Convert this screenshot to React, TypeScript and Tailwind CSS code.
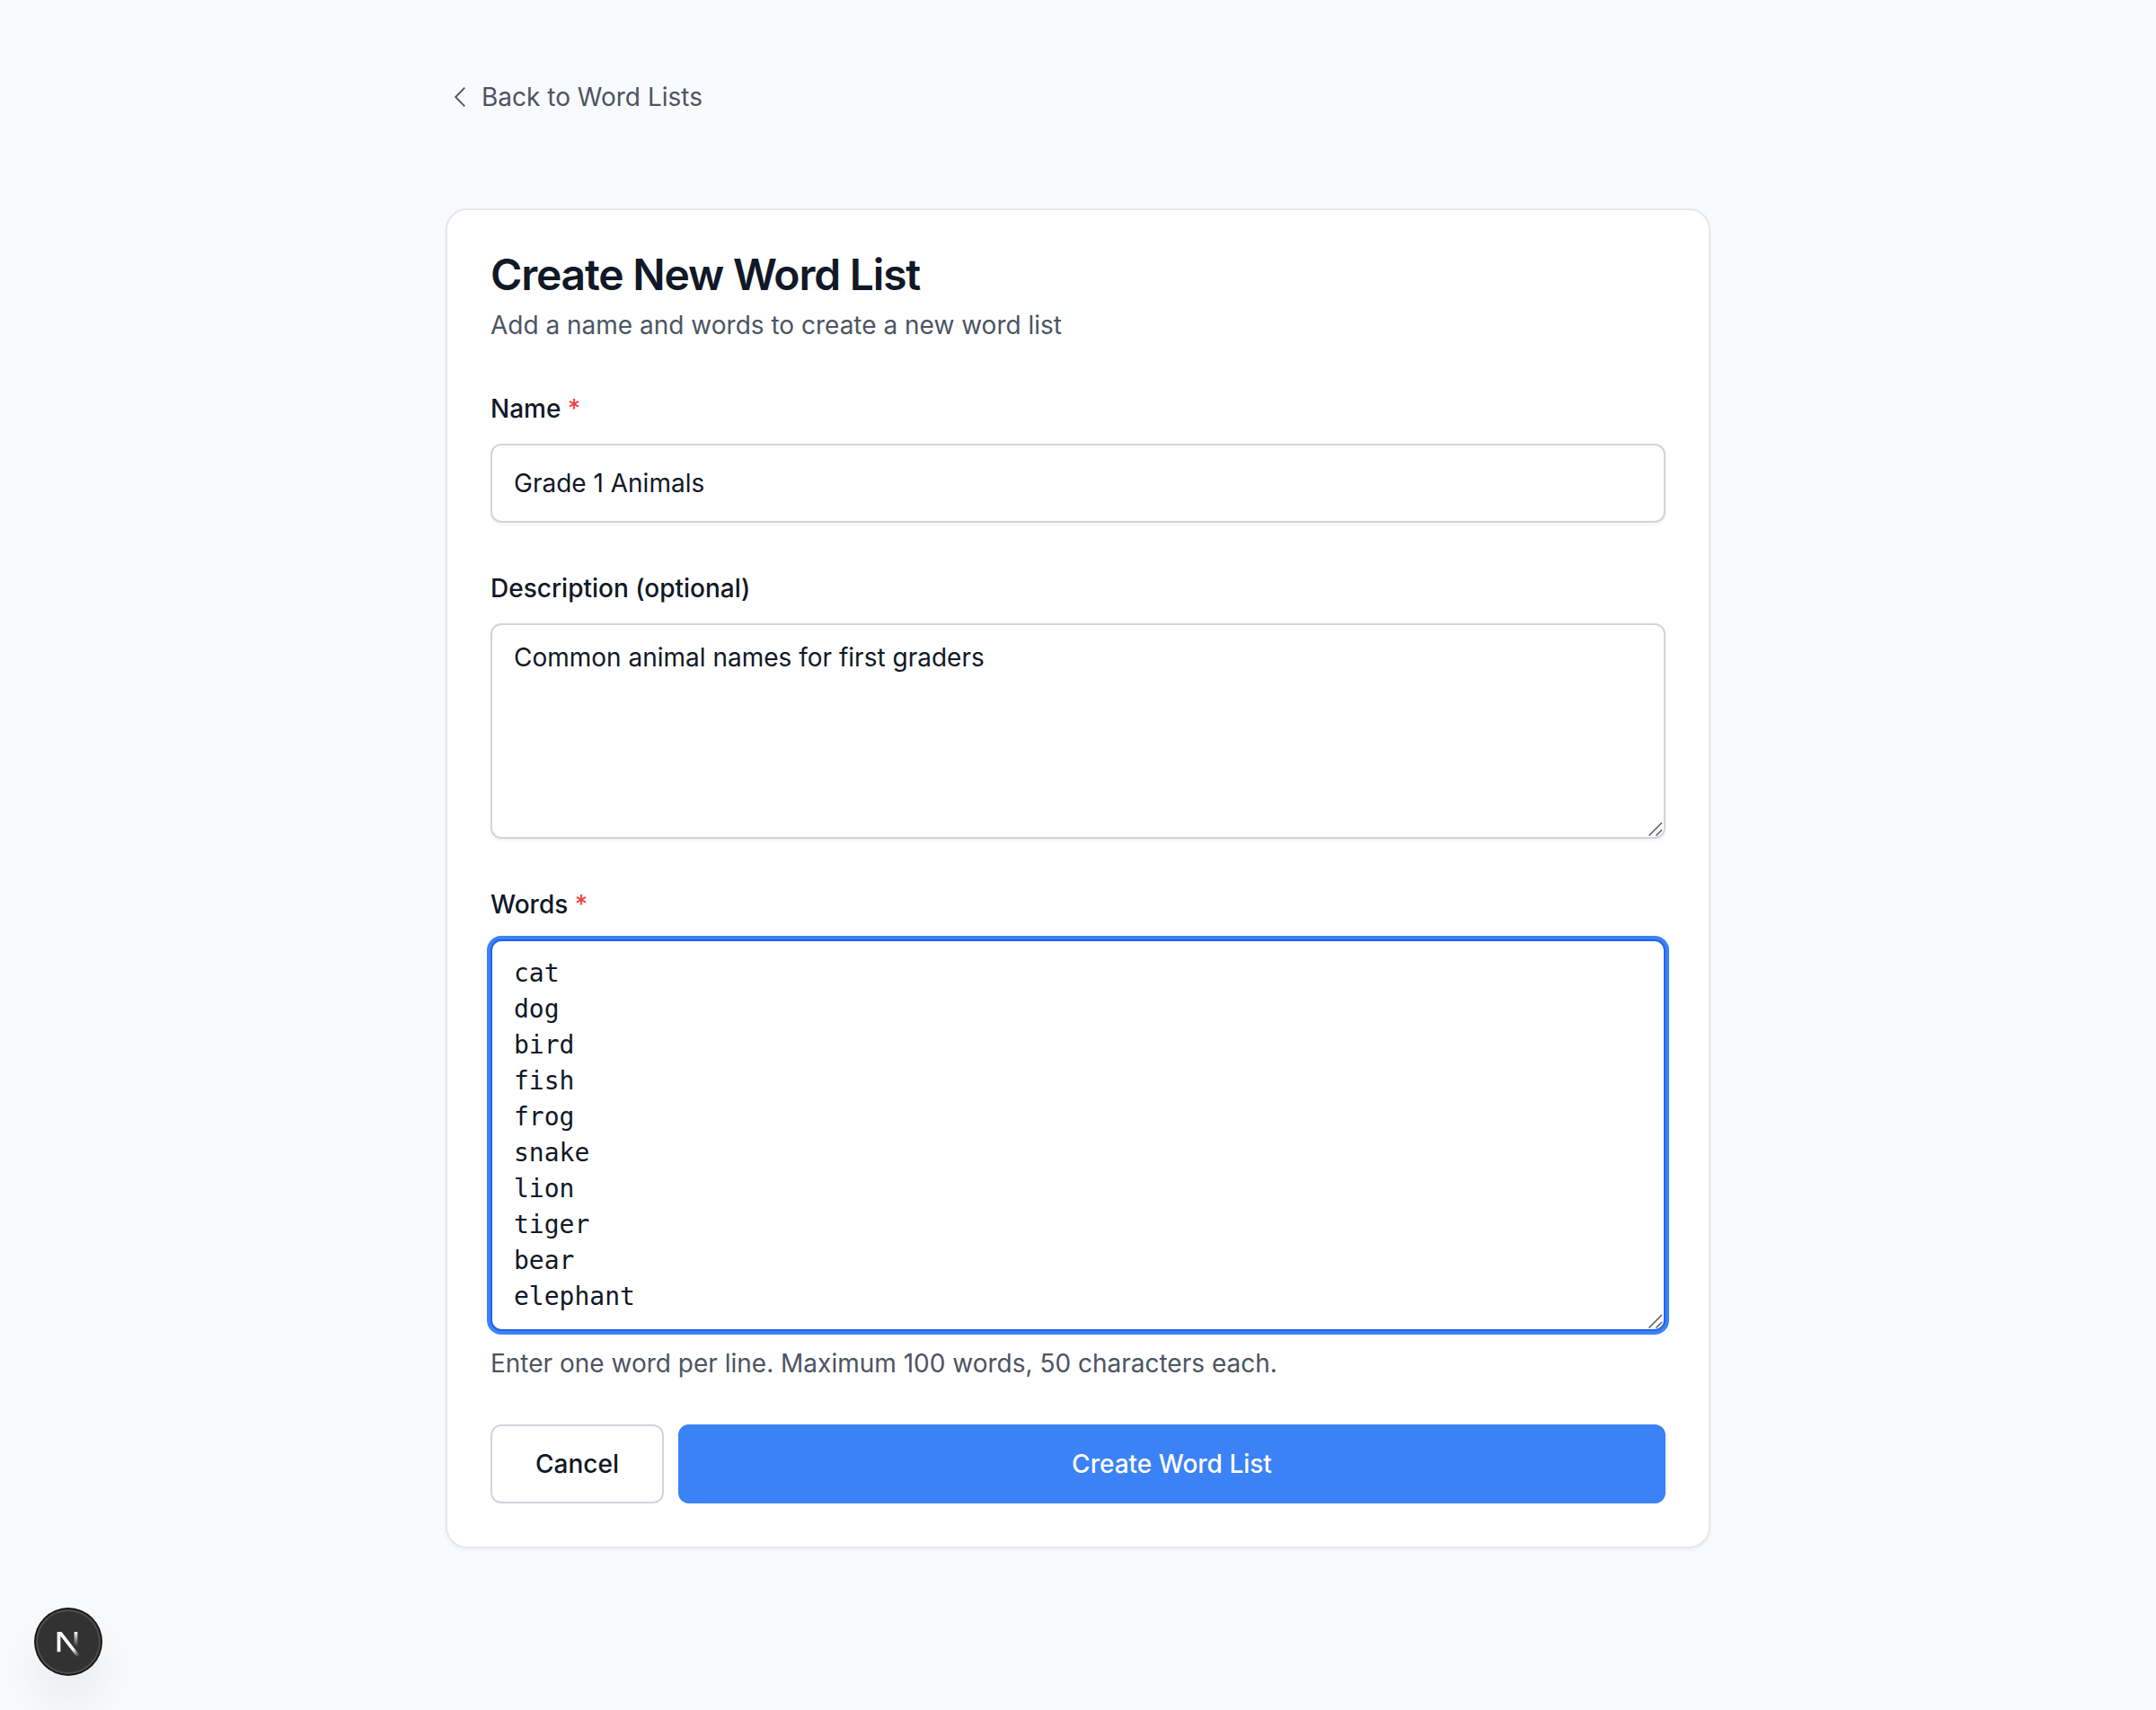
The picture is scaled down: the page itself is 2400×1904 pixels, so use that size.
const label = "block h-12 pt-px text-[28px] leading-[48px] font-medium";
const field =
  "block w-full resize-none rounded-[12px] border-2 bg-white px-6 text-[28px] leading-[40px] outline-none";

function Grip() {
  return (
    <svg className="absolute right-[3px] bottom-[3px] h-4 w-4" viewBox="0 0 16 16" fill="none" stroke="#5c5c5c" strokeWidth="1.5">
      <path d="M0.5 15.5L15 1M8.5 15.5L15 9" />
    </svg>
  );
}

function NextMark() {
  return (
    <svg className="h-20 w-20 shrink-0" viewBox="0 0 40 40" fill="none">
      <g transform="translate(12.4 13)">
        <path d="M13.3 15.2L2.34 1V12.6" stroke="url(#diag)" strokeWidth="1.86" mask="url(#cut)" />
        <path d="M11.825 1.5V13.1" stroke="url(#stem)" strokeWidth="1.86" />
      </g>
      <defs>
        <linearGradient id="diag" x1="9.95555" y1="11.1226" x2="15.4778" y2="17.9671" gradientUnits="userSpaceOnUse">
          <stop stopColor="white" />
          <stop offset="0.604072" stopColor="white" stopOpacity="0" />
          <stop offset="1" stopColor="white" stopOpacity="0" />
        </linearGradient>
        <linearGradient id="stem" x1="11.8222" y1="1.40039" x2="11.791" y2="9.62542" gradientUnits="userSpaceOnUse">
          <stop stopColor="white" />
          <stop offset="1" stopColor="white" stopOpacity="0" />
        </linearGradient>
        <mask id="cut" maskUnits="userSpaceOnUse" x="-5" y="-5" width="40" height="40">
          <rect x="-5" y="-5" width="40" height="40" fill="white" />
          <rect x="-5" y="-5" width="12" height="6.5" fill="black" />
        </mask>
      </defs>
    </svg>
  );
}

export default function App() {
  return (
    <div className="relative h-[1904px] w-full bg-[#f9fafc] pt-16 font-['Inter',sans-serif] text-[#111827] antialiased">
      <main className="mx-auto w-[1408px]">
        <a className="flex h-[88px] items-center pl-[5px] text-[28px] leading-[40px] text-[#4b5563]">
          <svg className="mr-[9px] h-[26px] w-[26px]" viewBox="0 0 26 26" fill="none" stroke="currentColor" strokeWidth="1.9">
            <path d="M16.3 2.7L6.2 13L16.3 23.3" />
          </svg>
          Back to Word Lists
        </a>
        <section className="mt-20 rounded-[24px] border-2 border-[#e5e7eb] bg-white p-12 shadow-[0_2px_4px_0_rgba(0,0,0,0.05)]">
          <h1 className="text-[48px] leading-[48px] font-semibold tracking-[-0.025em]">Create New Word List</h1>
          <p className="mt-3 text-[28px] leading-[40px] text-[#4b5563]">Add a name and words to create a new word list</p>
          <form className="mt-12 flex flex-col gap-12">
            <div className="flex flex-col gap-4">
              <label className={label}>
                Name <span className="text-[#ef4444]">*</span>
              </label>
              <input className={`${field} h-[88px] border-[#d1d5db] shadow-[0_2px_4px_0_rgba(0,0,0,0.05)]`} defaultValue="Grade 1 Animals" />
            </div>
            <div className="flex flex-col gap-4">
              <label className={label}>Description (optional)</label>
              <div className="relative">
                <textarea
                  className={`${field} h-[240px] border-[#d1d5db] py-4 shadow-[0_2px_4px_0_rgba(0,0,0,0.05)]`}
                  defaultValue="Common animal names for first graders"
                />
                <Grip />
              </div>
            </div>
            <div className="flex flex-col gap-4">
              <label className={label}>
                Words <span className="text-[#ef4444]">*</span>
              </label>
              <div className="relative">
                <textarea
                  className={`${field} h-[436px] overflow-hidden border-[#2563eb] py-4 font-['DejaVu_Sans_Mono',monospace] shadow-[0_0_0_4px_#3b82f6]`}
                  defaultValue={"cat\ndog\nbird\nfish\nfrog\nsnake\nlion\ntiger\nbear\nelephant"}
                />
                <Grip />
              </div>
              <p className="text-[28px] leading-[40px] text-[#4b5563]">
                Enter one word per line. Maximum 100 words, 50 characters each.
              </p>
            </div>
            <div className="flex gap-4">
              <button type="button" className="h-[88px] w-[193px] rounded-[12px] border-2 border-[#d1d5db] bg-white text-[28px] leading-[40px] font-medium">
                Cancel
              </button>
              <button type="button" className="h-[88px] flex-1 rounded-[12px] bg-[#3b82f6] text-[28px] leading-[40px] font-medium text-white">
                Create Word List
              </button>
            </div>
          </form>
        </section>
      </main>
      <div className="absolute top-[1792px] left-10 flex h-[72px] w-[72px] items-center justify-center rounded-full bg-[#323232] shadow-[0_0_0_2px_#171717,inset_0_0_0_2px_rgba(255,255,255,0.14),0_32px_64px_-16px_rgba(0,0,0,0.24)]">
        <NextMark />
      </div>
    </div>
  );
}
